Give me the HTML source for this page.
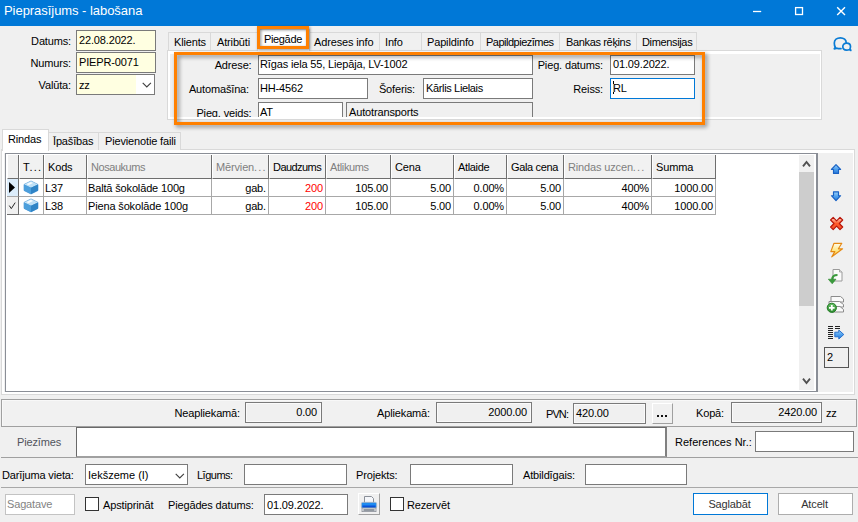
<!DOCTYPE html>
<html><head><meta charset="utf-8">
<style>
*{box-sizing:border-box;margin:0;padding:0}
html,body{width:858px;height:522px;overflow:hidden;background:#f0f0f0;font-family:"Liberation Sans",sans-serif;font-size:11px;color:#000;letter-spacing:-0.15px}
.a{position:absolute;white-space:nowrap}
.lbl{position:absolute;white-space:nowrap;line-height:14px;height:14px}
.r{text-align:right}
.inp{position:absolute;border:1px solid #7a7a7a;background:#fff;line-height:17px;padding-left:2px;white-space:nowrap;overflow:hidden}
.y{background:#ffffe1}
.ro{background:#f0f0f0;border-color:#7a7a7a}
.tab{position:absolute;top:32px;height:18px;border:1px solid #d9d9d9;border-bottom:none;background:#f0f0f0;line-height:18px;padding-left:6px;white-space:nowrap}

.hd{top:155px;height:24px;background:#f1f1f1;border-right:1px solid #6e6e6e;border-bottom:1px solid #6e6e6e;border-left:1px solid #fff;line-height:24px;padding-left:3px;overflow:hidden}
.c{height:18px;border-right:1px solid #a8a8a8;border-bottom:1px solid #a8a8a8;line-height:18px;padding-left:1px;padding-right:2px;overflow:hidden;background:#fff}
</style></head><body>
<!-- title bar -->
<div class="a" style="left:0;top:0;width:858px;height:26px;background:#0078d7"></div>
<div class="a" style="left:4px;top:2px;font-size:13px;letter-spacing:-0.05px;color:#fff;line-height:17px">Pieprasījums - labošana</div>
<svg class="a" style="left:740px;top:0" width="118" height="25" viewBox="0 0 118 25">
<path d="M13 11.5h8.2" stroke="#fff" stroke-width="1.3" fill="none"/>
<rect x="55.6" y="7.6" width="6.9" height="6.9" stroke="#fff" stroke-width="1.3" fill="none"/>
<path d="M97.2 7.2l7.8 7.8M105 7.2l-7.8 7.8" stroke="#fff" stroke-width="1.4" fill="none"/>
</svg>

<!-- left fields -->
<div class="lbl r" style="left:0;width:71px;top:34px">Datums:</div>
<div class="inp y" style="left:76px;top:30px;width:80px;height:21px;line-height:19px">22.08.2022.</div>
<div class="lbl r" style="left:0;width:71px;top:56px">Numurs:</div>
<div class="inp y" style="left:76px;top:52px;width:80px;height:21px;line-height:19px">PIEPR-0071</div>
<div class="lbl r" style="left:0;width:71px;top:78px">Valūta:</div>
<div class="inp" style="left:76px;top:74px;width:79px;height:21px;line-height:19px"><div class="a y" style="left:0;top:0;width:59px;height:19px;padding-left:2px;line-height:21px">zz</div>
<svg class="a" style="left:65px;top:7px" width="10" height="7"><path d="M0.7 0.9l4.1 4.1l4.1-4.1" stroke="#404040" stroke-width="1.1" fill="none"/></svg></div>

<!-- top tabs -->
<div class="a" style="left:167px;top:50px;width:655px;height:70px;border:1px solid #d9d9d9;background:#fff"></div><div class="a" style="left:170px;top:54px;width:650px;height:63px;background:#f0f0f0"></div>
<div class="tab" style="left:168px;width:43px;padding-left:5px">Klients</div>
<div class="tab" style="left:210px;width:48px">Atribūti</div>
<div class="tab" style="left:309px;width:71px;padding-left:4px">Adreses info</div>
<div class="tab" style="left:379px;width:43px;padding-left:5px">Info</div>
<div class="tab" style="left:421px;width:60px;padding-left:5px">Papildinfo</div>
<div class="tab" style="left:480px;width:80px;padding-left:5px;letter-spacing:-0.5px">Papildpiezīmes</div>
<div class="tab" style="left:559px;width:78px;letter-spacing:-0.35px">Bankas rēķins</div>
<div class="tab" style="left:636px;width:61px;padding-left:5px;letter-spacing:-0.35px">Dimensijas</div>
<div class="tab" style="left:257px;top:29px;height:22px;width:53px;background:#fff;padding-left:6px;line-height:19px;letter-spacing:-0.35px">Piegāde</div>

<!-- tab contents -->
<div class="lbl r" style="left:180px;width:71.5px;top:58px">Adrese:</div>
<div class="inp" style="left:258px;top:55px;width:275px;height:20px;padding-left:1px">Rīgas iela 55, Liepāja, LV-1002</div>
<div class="lbl r" style="left:180px;width:69px;top:82px">Automašīna:</div>
<div class="inp" style="left:258px;top:78px;width:110px;height:21px;line-height:19px;padding-left:1px">HH-4562</div>
<div class="lbl r" style="left:340px;width:75px;top:82px">Šoferis:</div>
<div class="inp" style="left:423px;top:78px;width:110px;height:21px;line-height:19px;letter-spacing:-0.35px">Kārlis Lielais</div>
<div class="lbl r" style="left:180px;width:71.5px;top:106px;height:11px;overflow:hidden">Pieg. veids:</div>
<div class="inp" style="left:258px;top:102px;width:85px;height:15px;border-bottom:none;line-height:18px;padding-left:1px">AT</div>
<div class="inp ro" style="left:346px;top:102px;width:187px;height:15px;border-bottom:none;line-height:18px">Autotransports</div>
<div class="lbl r" style="left:520px;width:83px;top:58px">Pieg. datums:</div>
<div class="inp" style="left:610px;top:55px;width:85px;height:20px">01.09.2022.</div>
<div class="lbl r" style="left:520px;width:83px;top:82px">Reiss:</div>
<div class="inp" style="left:610px;top:78px;width:85px;height:21px;border-color:#0078d7;line-height:19px;padding-left:2px">RL</div><div class="a" style="left:613px;top:81px;width:1px;height:13px;background:linear-gradient(#000 0,#000 23%,#b8b070 23%,#b8b070 85%,#000 85%)"></div>

<!-- orange highlights -->
<div class="a" style="left:257px;top:26px;width:52px;height:23px;border:3px solid #ff8000;filter:drop-shadow(1.5px 1.5px 1.5px rgba(0,0,0,.45))"></div>
<div class="a" style="left:174px;top:52px;width:531px;height:73px;border:3px solid #ff8000;filter:drop-shadow(2px 2px 2px rgba(0,0,0,.45))"></div>

<!-- chat icon -->
<svg class="a" style="left:830px;top:32px" width="26" height="24" viewBox="830 32 26 24">
<path d="M835.3 47.2 C834.6 46 834.3 44.6 834.3 43 C834.3 40 837 37.8 840.4 37.8 C843.8 37.8 846.2 40 846.2 42.4 M835.3 47.2 L834.3 48.8 L837 48.2 C838 48.6 839.5 48.8 841 48.6" fill="none" stroke="#0a7bd4" stroke-width="1.7" stroke-linejoin="round" stroke-linecap="round"/>
<path d="M846.6 43.1 C844.4 43.1 842.8 44.7 842.8 46.6 C842.8 48.6 844.4 50.2 846.6 50.2 C847.6 50.2 848.6 50 849.2 49.6 L850.8 50.4 L850 48.6 C850.4 48 850.5 47.3 850.5 46.6 C850.5 44.7 848.9 43.1 846.6 43.1 Z" fill="none" stroke="#0a7bd4" stroke-width="1.7" stroke-linejoin="round"/>
</svg>

<!-- lower tabs -->
<div class="a" style="left:1px;top:149px;width:854px;height:246px;border:1px solid #d9d9d9;background:#fff"></div><div class="a" style="left:4px;top:153px;width:849px;height:239px;background:#f0f0f0"></div>
<div class="tab" style="left:48px;top:132px;width:51px;padding-left:4px;line-height:16px">Īpašības</div>
<div class="tab" style="left:98px;top:132px;width:83px;padding-left:6px;line-height:16px">Pievienotie faili</div>
<div class="tab" style="left:2px;top:129px;height:22px;width:47px;background:#fff;padding-left:5px;line-height:18px">Rindas</div>

<!-- grid -->
<div class="a" id="grid" style="left:5px;top:153px;width:813px;height:239px;border:1px solid #8a8e96;border-right:2px solid #8a8e96;background:#fff"></div>
<div id="gh"><div class="a hd" style="left:7px;width:12px;color:#7f7f7f;"></div>
<div class="a hd" style="left:19px;width:25px;color:#000;">T<span style="letter-spacing:1.1px">...</span></div>
<div class="a hd" style="left:44px;width:43px;color:#000;">Kods</div>
<div class="a hd" style="left:87px;width:125px;color:#7f7f7f;letter-spacing:-0.45px">Nosaukums</div>
<div class="a hd" style="left:212px;width:57px;color:#7f7f7f;">Mērvien<span style="letter-spacing:1.1px">...</span></div>
<div class="a hd" style="left:269px;width:57px;color:#000;letter-spacing:-0.55px;">Daudzums</div>
<div class="a hd" style="left:326px;width:65px;color:#7f7f7f;letter-spacing:-0.35px;">Atlikums</div>
<div class="a hd" style="left:391px;width:63px;color:#000;">Cena</div>
<div class="a hd" style="left:454px;width:53px;color:#000;letter-spacing:-0.35px;">Atlaide</div>
<div class="a hd" style="left:507px;width:57px;color:#000;letter-spacing:-0.35px;">Gala cena</div>
<div class="a hd" style="left:564px;width:88px;color:#7f7f7f;">Rindas uzcen<span style="letter-spacing:1.1px">...</span></div>
<div class="a hd" style="left:652px;width:64px;color:#000;">Summa</div>
<div class="a c" style="left:7px;top:179px;width:12px;border-right-color:#6e6e6e;background:#dcedfb;"></div>
<div class="a c" style="left:19px;top:179px;width:25px;"></div>
<div class="a c" style="left:44px;top:179px;width:43px;">L37</div>
<div class="a c" style="left:87px;top:179px;width:125px;">Baltā šokolāde 100g</div>
<div class="a c r" style="left:212px;top:179px;width:57px;">gab.</div>
<div class="a c r" style="left:269px;top:179px;width:57px;color:#f00;">200</div>
<div class="a c r" style="left:326px;top:179px;width:65px;">105.00</div>
<div class="a c r" style="left:391px;top:179px;width:63px;">5.00</div>
<div class="a c r" style="left:454px;top:179px;width:53px;">0.00%</div>
<div class="a c r" style="left:507px;top:179px;width:57px;">5.00</div>
<div class="a c r" style="left:564px;top:179px;width:88px;">400%</div>
<div class="a c r" style="left:652px;top:179px;width:64px;">1000.00</div>
<div class="a c" style="left:7px;top:197px;width:12px;border-right-color:#6e6e6e;background:#f0f0f0;border-bottom-color:#6e6e6e;"></div>
<div class="a c" style="left:19px;top:197px;width:25px;"></div>
<div class="a c" style="left:44px;top:197px;width:43px;">L38</div>
<div class="a c" style="left:87px;top:197px;width:125px;">Piena šokolāde 100g</div>
<div class="a c r" style="left:212px;top:197px;width:57px;">gab.</div>
<div class="a c r" style="left:269px;top:197px;width:57px;color:#f00;">200</div>
<div class="a c r" style="left:326px;top:197px;width:65px;">105.00</div>
<div class="a c r" style="left:391px;top:197px;width:63px;">5.00</div>
<div class="a c r" style="left:454px;top:197px;width:53px;">0.00%</div>
<div class="a c r" style="left:507px;top:197px;width:57px;">5.00</div>
<div class="a c r" style="left:564px;top:197px;width:88px;">400%</div>
<div class="a c r" style="left:652px;top:197px;width:64px;">1000.00</div></div>

<svg class="a" style="left:5px;top:178px" width="40" height="38" viewBox="5 178 40 38">
<path d="M9 182L15 187.5L9 193Z" fill="#000"/>
<path d="M9.3 205.6L11.3 208.6L15.2 202.6" fill="none" stroke="#111" stroke-width="0.9"/>
<g transform="translate(31,187.5)"><path d="M0 -6.5L7 -3L7 3L0 6.5L-7 3L-7 -3Z" fill="#3f94d6" stroke="#3a8bd0" stroke-width="0.6" stroke-linejoin="round"/><path d="M0 -6.5L7 -3L0 0.3L-7 -3Z" fill="#bfe0f6"/><path d="M-4.5 -3.4L0 -5.6L2 -4.5L-2.5 -2.2Z" fill="#fff" opacity=".85"/><path d="M0 0.3L7 -3L7 3L0 6.5Z" fill="#2f84c6"/><path d="M0 0.3L-7 -3L-7 3L0 6.5Z" fill="#4c9fdc"/></g><g transform="translate(31,205.4)"><path d="M0 -6.5L7 -3L7 3L0 6.5L-7 3L-7 -3Z" fill="#3f94d6" stroke="#3a8bd0" stroke-width="0.6" stroke-linejoin="round"/><path d="M0 -6.5L7 -3L0 0.3L-7 -3Z" fill="#bfe0f6"/><path d="M-4.5 -3.4L0 -5.6L2 -4.5L-2.5 -2.2Z" fill="#fff" opacity=".85"/><path d="M0 0.3L7 -3L7 3L0 6.5Z" fill="#2f84c6"/><path d="M0 0.3L-7 -3L-7 3L0 6.5Z" fill="#4c9fdc"/></g>
</svg>
<!-- scrollbar -->
<div class="a" style="left:799px;top:155px;width:15px;height:235px;background:#f0f0f0"></div>
<div class="a" style="left:799px;top:172px;width:15px;height:134px;background:#cdcdcd"></div>
<svg class="a" style="left:802px;top:160px" width="9" height="8"><path d="M1 6.3l3.5-4.3l3.5 4.3" stroke="#505050" stroke-width="1.9" fill="none"/></svg>
<svg class="a" style="left:802px;top:377px" width="9" height="8"><path d="M1 1.7l3.5 4.3l3.5-4.3" stroke="#505050" stroke-width="1.9" fill="none"/></svg>

<!-- right icons -->

<svg class="a" style="left:824px;top:158px" width="30" height="190" viewBox="824 158 30 190">
<defs>
<linearGradient id="gb" x1="0" y1="0" x2="0" y2="1"><stop offset="0" stop-color="#9bd2fb"/><stop offset="0.55" stop-color="#4c9eec"/><stop offset="1" stop-color="#2a7cdc"/></linearGradient>
<linearGradient id="gr" x1="0" y1="0" x2="0" y2="1"><stop offset="0" stop-color="#ffd8c8"/><stop offset="0.5" stop-color="#ff5a28"/><stop offset="1" stop-color="#f0502a"/></linearGradient>
<linearGradient id="gy" x1="0" y1="0" x2="0" y2="1"><stop offset="0" stop-color="#fffdf0"/><stop offset="0.55" stop-color="#ffe680"/><stop offset="1" stop-color="#ffc83a"/></linearGradient>
<linearGradient id="gg" x1="0" y1="0" x2="0" y2="1"><stop offset="0" stop-color="#6cc06a"/><stop offset="1" stop-color="#2a8a2c"/></linearGradient>
</defs>
<!-- up -->
<path d="M836 164.6 L840.6 169.5 L838.5 169.5 L838.5 173.4 L833.5 173.4 L833.5 169.5 L831.4 169.5 Z" fill="url(#gb)" stroke="#1a62c4" stroke-width="1.15" stroke-linejoin="round"/>
<!-- down -->
<path d="M836 200.7 L840.6 195.7 L838.5 195.7 L838.5 191.8 L833.5 191.8 L833.5 195.7 L831.4 195.7 Z" fill="url(#gb)" stroke="#1a62c4" stroke-width="1.15" stroke-linejoin="round"/>
<!-- X -->
<path d="M830.6 220 L833.2 217.4 L836.6 220.8 L840 217.4 L842.7 220 L839.3 223.5 L842.7 227 L840 229.6 L836.6 226.2 L833.2 229.6 L830.6 227 L834 223.5 Z" fill="url(#gr)" stroke="#b81408" stroke-width="1.15" stroke-linejoin="round"/>
<!-- bolt -->
<path d="M834 243.3 L841.8 243.3 L838.4 248.8 L842.6 248.8 L831.8 256.8 L834.8 251.6 L830.8 251.6 Z" fill="url(#gy)" stroke="#e58a14" stroke-width="1.15" stroke-linejoin="round"/>
<!-- doc arrow -->
<path d="M833 269.5 L839.5 269.5 L842 272 L842 281 L833 281 Z" fill="#fbfbfb" stroke="#9a9a9a" stroke-width="1"/>
<path d="M839.5 269.5 L839.5 272 L842 272" fill="#e4e4e4" stroke="#9a9a9a" stroke-width="0.8"/>
<path d="M837.5 275 C834 275 832.2 277 832.2 279.5" fill="none" stroke="#3a9a3c" stroke-width="2.2"/>
<path d="M828.3 279.2 L836 279.2 L832.2 283.8 Z" fill="#3a9a3c" stroke="#2a8a2c" stroke-width="0.6"/>
<!-- add pages -->
<path d="M831 296.5 L840.5 296.5 L843.5 299 L843.5 302 L831 302 Z" fill="#fafafa" stroke="#8c8c8c" stroke-width="1"/>
<path d="M829 301.5 L839.5 301.5 L843.5 304.5 L843.5 307 L829 307 Z" fill="#fafafa" stroke="#8c8c8c" stroke-width="1"/>
<path d="M832 306.5 L840 306.5 L843.5 309.5 L843.5 312 L832 312 Z" fill="#fafafa" stroke="#8c8c8c" stroke-width="1"/>
<circle cx="831.8" cy="307.8" r="4.6" fill="url(#gg)" stroke="#1f7a22" stroke-width="1"/>
<path d="M829 307.8h5.6M831.8 305v5.6" stroke="#fff" stroke-width="1.8"/>
<!-- list arrow -->
<path d="M828 326.5h5M828 328.5h5M828 330.5h5M828 332.5h5M828 334.5h5M828 336.5h5M828 338.5h5M835 326.5h5M835 328.5h5" stroke="#222" stroke-width="1"/>
<path d="M834.8 332.2 L838.8 332.2 L838.8 330 L843.8 334.5 L838.8 339 L838.8 336.8 L834.8 336.8 Z" fill="url(#gb)" stroke="#1c68c8" stroke-width="0.9" stroke-linejoin="round"/>
</svg>

<div class="inp" style="left:824px;top:347px;width:25px;height:21px;line-height:18px;border-color:#555;background:#f0f0f0;padding-left:2px">2</div>

<!-- totals -->
<div class="a" style="left:1px;top:399px;width:856px;height:28px;border:1px solid #a0a0a0;background:#f1f1f1;box-shadow:inset 1px 1px 0 #f8f8f8"></div>
<div class="lbl r" style="left:140px;width:100px;top:406px">Neapliekamā:</div>
<div class="inp ro r" style="left:245px;top:402px;width:77px;box-shadow:inset 0 0 0 1px #fafafa;height:21px;line-height:19px;padding-right:4px">0.00</div>
<div class="lbl r" style="left:330px;width:100px;top:406px">Apliekamā:</div>
<div class="inp ro r" style="left:436px;top:402px;width:96px;box-shadow:inset 0 0 0 1px #fafafa;height:21px;line-height:19px;padding-right:4px">2000.00</div>
<div class="lbl" style="left:546px;top:407px;letter-spacing:-0.9px">PVN:</div>
<div class="inp ro" style="left:573px;top:403px;width:73px;height:21px;line-height:19px;box-shadow:inset 0 0 0 1px #fafafa">420.00</div>
<div class="a" style="left:652px;top:403px;width:21px;height:21px;border:1px solid #fff;border-right-color:#a0a0a0;border-bottom-color:#a0a0a0;background:#f0f0f0"></div><div class="a" style="left:657px;top:415px;width:1.5px;height:2px;background:#111;box-shadow:4px 0 0 #111,8px 0 0 #111"></div>
<div class="lbl" style="left:696px;top:406px">Kopā:</div>
<div class="inp ro r" style="left:731px;top:402px;width:91px;box-shadow:inset 0 0 0 1px #fafafa;height:21px;line-height:19px;padding-right:4px">2420.00</div>
<div class="lbl" style="left:826px;top:406px">zz</div>

<!-- piezimes -->
<div class="a" style="left:1px;top:457px;width:857px;height:1px;background:#a0a0a0"></div>
<div class="lbl" style="left:17px;top:435px;color:#50545c">Piezīmes</div>
<div class="a" style="left:76px;top:427px;width:591px;height:30px;background:#fff;border:1px solid #696969;border-right:2px solid #808080;border-bottom-color:#a0a0a0"></div>
<div class="lbl" style="left:675px;top:435px;letter-spacing:0.03px">References Nr.:</div>
<div class="inp" style="left:755px;top:431px;width:99px;height:21px"></div>

<!-- darijuma row -->
<div class="lbl" style="left:2px;top:468px">Darījuma vieta:</div>
<div class="inp" style="left:85px;top:464px;width:103px;height:21px;line-height:20px;letter-spacing:0">Iekšzeme (I)
<svg class="a" style="left:89px;top:8px" width="10" height="7"><path d="M0.7 0.9l4.1 4.1l4.1-4.1" stroke="#404040" stroke-width="1.1" fill="none"/></svg></div>
<div class="lbl" style="left:197px;top:468px;letter-spacing:-0.5px">Līgums:</div>
<div class="inp" style="left:244px;top:464px;width:103px;height:21px"></div>
<div class="lbl" style="left:356px;top:468px">Projekts:</div>
<div class="inp" style="left:410px;top:464px;width:103px;height:21px"></div>
<div class="lbl" style="left:523px;top:468px">Atbildīgais:</div>
<div class="inp" style="left:585px;top:464px;width:102px;height:21px"></div>
<div class="a" style="left:1px;top:487px;width:857px;height:1px;background:#a8a8a8"></div>

<!-- bottom row -->
<div class="inp" style="left:5px;top:494px;width:70px;height:21px;line-height:19px;color:#838383;border-color:#c3c3c3;padding-left:1px">Sagatave</div>
<div class="a" style="left:85px;top:497px;width:14px;height:14px;border:1px solid #333;background:#fff"></div>
<div class="lbl" style="left:103px;top:498px">Apstiprināt</div>
<div class="lbl" style="left:168px;top:498px">Piegādes datums:</div>
<div class="inp" style="left:264px;top:494px;width:84px;height:21px;line-height:20px">01.09.2022.</div>
<div class="a" style="left:358px;top:493px;width:22px;height:22px;border:1px solid #fff;border-right-color:#a0a0a0;border-bottom-color:#a0a0a0;background:#f0f0f0"></div>
<svg class="a" style="left:360px;top:495px" width="18" height="18" viewBox="360 495 18 18">
<path d="M364.5 503 L364.5 496.5 L371.5 496.5 L373.5 498.5 L373.5 503 Z" fill="#f4f6fa" stroke="#8a8f98" stroke-width="1"/>
<rect x="361.3" y="502.3" width="15.4" height="6" rx="1.5" fill="#1e8bf0" stroke="#b8bcc4" stroke-width="0.8"/>
<rect x="362.5" y="505.5" width="13" height="2" fill="#0a50d8"/>
<rect x="362" y="508" width="14" height="3.6" fill="#e6e8ec" stroke="#8a8f98" stroke-width="0.8"/>
<path d="M363.5 510h11" stroke="#5a6470" stroke-width="1.2"/>
</svg>
<div class="a" style="left:390px;top:497px;width:14px;height:14px;border:1px solid #333;background:#fff"></div>
<div class="lbl" style="left:407px;top:498px">Rezervēt</div>
<div class="a" style="left:693px;top:493px;width:75px;height:22px;border:1px solid #0078d7;background:#fff;text-align:center;line-height:20px;color:#333;text-indent:-2px">Saglabāt</div>
<div class="a" style="left:778px;top:493px;width:75px;height:22px;border:1px solid #adadad;background:#fff;text-align:center;line-height:20px;color:#333;text-indent:-2px">Atcelt</div>
</body></html>
